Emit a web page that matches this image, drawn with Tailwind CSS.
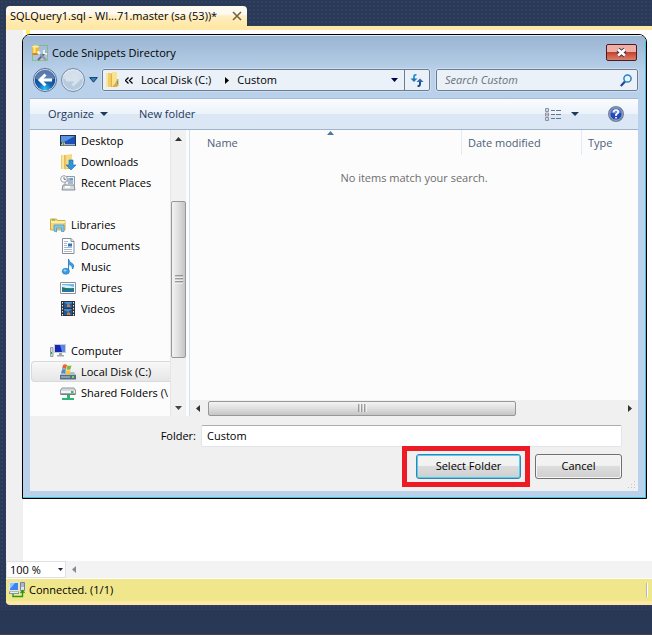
<!DOCTYPE html>
<html lang="en">
<head>
  <meta charset="UTF-8" />
  <meta name="viewport" content="width=device-width, initial-scale=1.0"/>
  <title>SQLQuery1.sql</title>
  <script src="https://cdn.jsdelivr.net/npm/@tailwindcss/browser@4"></script>
</head>
<body class="min-h-screen flex flex-col bg-[#2a3956] pt-1.5 pl-1.5 text-[11px] leading-4 text-black font-['Open_Sans','Noto_Sans',sans-serif] bg-[radial-gradient(#34466a_0.5px,transparent_1px)] bg-[length:4px_4px]">

  <!-- Editor tab -->
  <div class="flex">
    <div class="flex items-center h-5 w-[241px] pl-1 pr-1 rounded-t-sm bg-linear-to-b from-[#fffaf0] from-40% via-[#ffeec2] via-50% to-[#ffe8a6]">
      <span class="whitespace-nowrap">SQLQuery1.sql - WI...71.master (sa (53))*</span>
      <button class="ml-auto" aria-label="Close tab">
        <svg class="size-3" viewBox="0 0 12 12" fill="none" stroke="#75633d" stroke-width="1.6"><path d="M2 2l8 8M10 2l-8 8"/></svg>
      </button>
    </div>
  </div>

  <main class="relative flex-1 flex flex-col border-t-4 border-[#ffe8a6] bg-white">
    <div class="flex-1 flex">
      <div class="w-[17px] bg-[#f0f0f0]"></div>
      <div class="w-1 h-1 ml-[3px] bg-[#ffee62]"></div>
    </div>

    <!-- Dialog -->
    <section role="dialog" aria-label="Code Snippets Directory" class="absolute left-4 right-[5px] top-1 border border-black rounded-t-lg overflow-hidden bg-[#b9d1ea]">
      <div class="border-r border-b border-[#43c3dd] border-t border-t-[#e4eef8] px-[7px] pb-1.5 bg-linear-to-b from-[#9ab5d2] to-[#b9d1ea] to-[36px]">

        <header class="flex items-center h-[33px] pl-0.5">
          <svg class="size-4" viewBox="0 0 16 16">
            <path d="M.5.5h15v15H.5z" fill="none" stroke="#67b22e" stroke-dasharray="1 1"/>
            <path d="M0 1h7v8H0z" fill="#f0b72c"/><path d="M1.500 1h2v8h-2z" fill="#ffe9a0"/><ellipse cx="3.500" cy="1.500" rx="3.500" ry="1.300" fill="#ffe89a"/><ellipse cx="3.500" cy="9" rx="3.500" ry="1" fill="#c98813"/>
            <path d="M6 15l8-8" stroke="#667" stroke-width="1.800"/><path d="M7 8l7 7" stroke="#8c97a8" stroke-width="2"/><path d="M5.500 6.500L8 9" stroke="#e8edf3" stroke-width="2.500"/><path d="M12 5v3l3 1" fill="none" stroke="#edf1f7" stroke-width="2"/>
          </svg>
          <h1 class="ml-1">Code Snippets Directory</h1>
          <button class="ml-auto mr-px flex items-center justify-center w-[31px] h-[17px] rounded-xs border border-[#4e1a26] bg-linear-to-b from-[#eeb0a4] from-45% via-[#c5402f] via-50% to-[#d7806c]" aria-label="Close">
            <svg class="w-[13px] h-[11px]" viewBox="0 0 13 11"><path d="M3 2.500l7 6M10 2.500l-7 6" stroke="#4a3945" stroke-width="4.500"/><path d="M3 2.500l7 6M10 2.500l-7 6" stroke="#fff" stroke-width="2.600"/></svg>
          </button>
        </header>

        <div class="flex items-center h-[29px] pb-[7px]">
          <div class="flex items-center gap-1 mr-1 pl-[3px]">
            <button aria-label="Back">
              <svg class="size-6" viewBox="0 0 24 24">
                <defs><radialGradient id="back" cx=".5" cy=".95" r=".8"><stop offset="0" stop-color="#32c7f5"/><stop offset=".4" stop-color="#1567b4"/><stop offset="1" stop-color="#123e8b"/></radialGradient></defs>
                <circle cx="12" cy="12" r="11.500" fill="#dfe9f4" stroke="#50688a"/><circle cx="12" cy="12" r="10.300" fill="url(#back)"/>
                <path d="M2.500 11a9.500 9.500 0 0 1 19 0q-9.500 2.500-19 0z" fill="#fff" opacity=".3"/>
                <path d="M12.500 6.500L7 12l5.500 5.500M7.500 12H19" fill="none" stroke="#fff" stroke-width="3"/>
              </svg>
            </button>
            <button aria-label="Forward">
              <svg class="size-6" viewBox="0 0 24 24">
                <circle cx="12" cy="12" r="11.500" fill="#dce7f2" stroke="#7389a4"/><circle cx="12" cy="12" r="10" fill="#b8cade"/>
                <path d="M2.500 11a9.500 9.500 0 0 1 19 0q-9.500 2.500-19 0z" fill="#fff" opacity=".4"/>
                <path d="M11.500 6.500L17 12l-5.500 5.500M16.500 12H5" fill="none" stroke="#d6e2ee" stroke-width="3"/>
              </svg>
            </button>
            <button aria-label="Recent pages">
              <svg class="w-[9px] h-[6px]" viewBox="0 0 9 6"><path d="M.7.6h7.600L4.500 5.200z" fill="#3484bd" stroke="#173c68"/></svg>
            </button>
          </div>

          <nav class="flex-1 flex items-center h-[22px] border border-[#6c7d90] rounded-xs bg-[#eaf1f9] outline outline-[#cddded]">
            <svg class="ml-0.5 w-[15px] h-4" viewBox="0 0 15 16"><path d="M1 1h6v14H1z" fill="#f0cd69"/><path d="M1 1h2v14H1z" fill="#fbe59c"/><path d="M6 2l6 1v12H6z" fill="#dfb044"/><path d="M7 0h5v9l-5 6z" fill="#fbe28f"/><path d="M12 7h1.500v7l-4 1z" fill="#dcae3c"/><path d="M12.500 9v3" stroke="#4a93d0"/></svg>
            <svg class="ml-[5px] w-2 h-[7px]" viewBox="0 0 8 7" fill="none" stroke="#000" stroke-width="1.300"><path d="M3.500.5l-3 3 3 3M7.500.5l-3 3 3 3"/></svg>
            <a href="#" class="ml-2 whitespace-nowrap">Local Disk (C:)</a>
            <svg class="ml-3.5 w-1 h-[7px]" viewBox="0 0 4 7"><path d="M0 0v7l4-3.500z"/></svg>
            <a href="#" class="ml-2">Custom</a>
            <button class="ml-auto w-[19px] flex justify-center" aria-label="Previous locations"><svg class="w-[7px] h-1" viewBox="0 0 7 4"><path d="M0 0h7L3.500 4z" fill="#00004e"/></svg></button>
            <button class="w-[25px] h-full border-l border-[#6c7d90] flex items-center justify-center" aria-label="Refresh">
              <svg class="w-[14px] h-[13px]" viewBox="0 0 14 13"><path d="M6.500.7Q4 .5 4 3v2" fill="none" stroke="#2c9bd1" stroke-width="2"/><path d="M.5 4.500h7L4 8z" fill="#2c72b5"/><path d="M7.500 12.300Q10 12.300 10 10V8" fill="none" stroke="#214d88" stroke-width="2"/><path d="M6.500 8h7L10 4.500z" fill="#286bb0"/></svg>
            </button>
          </nav>

          <label class="ml-1.5 flex items-center w-[202px] h-[22px] border border-[#6c7d90] rounded-xs bg-[#eaf1f9] outline outline-[#cddded]">
            <input type="search" aria-label="Search Custom" placeholder="Search Custom" class="flex-1 min-w-0 pl-2 italic outline-none placeholder:text-[#6b7075]">
            <svg class="mr-[5px] w-3 h-[13px]" viewBox="0 0 12 13"><path d="M5 7.500L.8 12" stroke="#1e4a96" stroke-width="2.200"/><circle cx="7.500" cy="4.500" r="3.600" fill="#e5f4fc" stroke="#2c80c0" stroke-width="1.500"/></svg>
          </label>
        </div>

        <!-- Toolbar -->
        <div class="flex items-center h-8 pl-[18px] border-t border-b border-t-[#a5bad3] border-b-[#a0b4cf] text-[#1e395b] bg-linear-to-b from-[#fafcff] to-[#ecf2fb] to-50% shadow-[inset_0_-15px_0_#dce7f5]">
          <button class="flex items-center gap-1.5">Organize <svg class="w-2 h-1" viewBox="0 0 8 4"><path d="M0 0h8L4 4z" fill="#1e395b"/></svg></button>
          <button class="ml-[31px]">New folder</button>
          <button class="ml-auto flex items-center gap-2.5" aria-label="Change your view">
            <svg class="w-4 h-[13px]" viewBox="0 0 16 13">
              <path d="M.5.5h3v3h-3zM.5 5h3v3h-3zM.5 9.500h3v3h-3z" fill="#fff" stroke="#8893a5"/><path d="M1.500 1.500h1v1h-1z" fill="#379"/><path d="M1.500 6h1v1h-1z" fill="#c22"/><path d="M1.500 10.500h1v1h-1z" fill="#284"/>
              <path d="M6 2.500h4M11 2.500h5M6 6.500h4M11 6.500h5M6 10.500h4M11 10.500h5" stroke="#65758d"/>
            </svg>
            <svg class="w-2 h-1" viewBox="0 0 8 4"><path d="M0 0h8L4 4z" fill="#1e395b"/></svg>
          </button>
          <button class="ml-[29px] mr-3.5" aria-label="Help">
            <svg class="size-4" viewBox="0 0 16 16"><circle cx="8" cy="8" r="7.300" fill="#2248b5" stroke="#77828f" stroke-width="1.400"/><circle cx="8" cy="8" r="6.200" fill="none" stroke="#c9d3e6" stroke-width=".8"/><path d="M3 6.500a5.300 5.300 0 0 1 10 0q-5 2-10 0z" fill="#6b8ee0"/><path d="M5.700 6.200Q5.800 4 8 4t2.300 2Q10.300 7.200 8 8.500V10M8 11v1.600" fill="none" stroke="#fff" stroke-width="1.700"/></svg>
          </button>
        </div>

        <div class="flex h-[286px] bg-[#fcfcfc]">
          <!-- Navigation pane -->
          <ul class="w-[140px] overflow-hidden whitespace-nowrap *:flex *:items-center *:h-[21px] *:gap-[5px] *:pl-[30px]">
            <li>
              <svg class="size-4 shrink-0" viewBox="0 0 16 16"><path d="M0 2h16v11H0z" fill="#234"/><path d="M1 3h14v9H1z" fill="#1b51b8"/><path d="M1 3h14L4 9H1z" fill="#5a94e4"/><path d="M1 11h14v1.500H1z" fill="#9db3cc"/><path d="M2 9.500h3v2.500H2z" fill="#e9c243"/><path d="M3 10h1v2H3z" fill="#3ba548"/></svg>
              <a href="#">Desktop</a>
            </li>
            <li>
              <svg class="size-4 shrink-0" viewBox="0 0 16 16"><path d="M1 1h10v14H1z" fill="#dcae42"/><path d="M1.500 1h3v14h-3z" fill="#fae7a0"/><path d="M5 1l7-1v11l-7 5z" fill="#f6d984"/><path d="M5 1v14" stroke="#d3a640" stroke-width=".8"/><path d="M9 6h4v5h3l-5 5-5-5h3z" fill="#2f96da" stroke="#1769ab" stroke-width=".6"/></svg>
              <a href="#">Downloads</a>
            </li>
            <li>
              <svg class="size-4 shrink-0" viewBox="0 0 16 16"><path d="M5 1.500h9.500v9H5z" fill="#edf2f7" stroke="#929aa4"/><path d="M7 4h3M7 6h6M8 8h5" stroke="#62809e"/><path d="M10 3h3v2h-3z" fill="#58a4d9"/><path d="M3 10h11l1 5H2z" fill="#d5dadf" stroke="#8a9097"/><path d="M5 12h5" stroke="#fff" stroke-width="2"/><circle cx="4" cy="4" r="3.300" fill="#fff" stroke="#9aa0a5"/><path d="M4 2v2.300h2" fill="none" stroke="#555" stroke-width=".8"/></svg>
              <a href="#">Recent Places</a>
            </li>
            <li></li>
            <li class="pl-5!">
              <svg class="size-4 shrink-0" viewBox="0 0 16 16"><path d="M.5 2h6l1 1.500h7.500V13H.5z" fill="#f5d775" stroke="#d2ab43"/><path d="M1 5h14" stroke="#fff5c8" stroke-width="1.500"/><path d="M2 3h3" stroke="#4cae45"/><path d="M4 14V8h10v6.500h-2.500V11h-5v4z" fill="#86c8e9" stroke="#4a98c4" stroke-width=".8"/></svg>
              <a href="#">Libraries</a>
            </li>
            <li>
              <svg class="size-4 shrink-0" viewBox="0 0 16 16"><path d="M2.500.5h8.500l3 3v12H2.500z" fill="#fff" stroke="#858d98"/><path d="M11 .5v3h3" fill="#dde3ea" stroke="#858d98"/><path d="M4 3.500h4M4 5.500h3M4 7.500h3M4 9.500h8M4 11.500h8M4 13.500h8" stroke="#a9b8cc"/><path d="M8 5.500h4v3H8z" fill="#2b77bb"/></svg>
              <a href="#">Documents</a>
            </li>
            <li>
              <svg class="size-4 shrink-0" viewBox="0 0 16 16"><path d="M8.500 12V0Q9 3 12 4.500T12.500 10Q13 6.500 9.500 5.500" fill="#3aa1e6" stroke="#1c73bd" stroke-width=".8"/><ellipse cx="5.800" cy="12.300" rx="3.600" ry="3" fill="#379fe5" stroke="#1b70b7" stroke-width=".6"/><ellipse cx="5" cy="11.500" rx="1.500" ry="1" fill="#9bd7fb"/></svg>
              <a href="#">Music</a>
            </li>
            <li>
              <svg class="size-4 shrink-0" viewBox="0 0 16 16"><path d="M.5 2.500h15v11H.5z" fill="#fff" stroke="#8b929a"/><path d="M2 4h12v8H2z" fill="#71bbeb"/><path d="M2 5q7 0 12 2v1H2z" fill="#d8f0fa"/><path d="M2 7q6 2 12 1v2H2z" fill="#257a65"/><path d="M2 10h12v2H2z" fill="#2874ad"/></svg>
              <a href="#">Pictures</a>
            </li>
            <li>
              <svg class="size-4 shrink-0" viewBox="0 0 16 16"><path d="M1 0h14v15H1z" fill="#283442"/><path d="M2.500 1v14M13.500 1v14" stroke="#e8edf1" stroke-dasharray="1.500 1.500"/><path d="M4 1h8v6H4zM4 8h8v6H4z" fill="#418fd2"/><path d="M4 1l4 3 4-2v5H4zM4 9l4 2 4-3v6H4z" fill="#245895"/><path d="M7 4l2-1 2 3H7zM7 12l2-1 2 3H7z" fill="#d27c41"/></svg>
              <a href="#">Videos</a>
            </li>
            <li></li>
            <li class="pl-5!">
              <svg class="size-4 shrink-0" viewBox="0 0 16 16"><path d="M4 1h12v9H4z" fill="#c7cdd3"/><path d="M5 2h10v7H5z" fill="#1428b5"/><path d="M10 2h5v7h-3z" fill="#5b86e8"/><path d="M9 10h3v2h2v1.500H7V12h2z" fill="#a0a7ad"/><path d="M.5 4.500h2.500v9H.5z" fill="#d3d9de" stroke="#838b92" stroke-width=".8"/><path d="M1.500 9v2" stroke="#36a83f"/></svg>
              <a href="#">Computer</a>
            </li>
            <li class="ml-px pl-7! border border-r-0 border-[#d9d9d9] rounded-l-sm bg-linear-to-b from-[#f8f8f8] to-[#e6e6e6]">
              <svg class="size-4 shrink-0" viewBox="0 0 16 16"><path d="M2 8h12l2 3v4H0v-4z" fill="#b4bcc5"/><path d="M0 11h16v4.500H0z" fill="#566f86"/><path d="M1 12h9v2H1z" fill="#87a0b3"/><path d="M12 12h2v2h-2z" fill="#6ee263"/><path d="M3 1q2-1.500 4 0L6 5q-2-1-4 0z" fill="#ed6330"/><path d="M7.500 1.200q2 1 4 0l-1 4q-2 1-4 0z" fill="#7cbc37"/><path d="M2 5.500q2-1 4 0L5 9.500q-2-1-4 0z" fill="#3f8fdd"/><path d="M6.500 6q2 1 4 0l-1 4q-2 1-4 0z" fill="#f7c52d"/></svg>
              <a href="#">Local Disk (C:)</a>
            </li>
            <li>
              <svg class="size-4 shrink-0" viewBox="0 0 16 16"><path d="M2 3h12l1.500 2v4.500H.5V5z" fill="#d4d9dd" stroke="#7b848c" stroke-width=".8"/><path d="M1 6h14v3H1z" fill="#f2f4f5"/><path d="M1 9h14" stroke="#525d66"/><path d="M11 6h2.500v2H11z" fill="#36c147"/><path d="M7 10h3v3h4v2H2v-2h5z" fill="#2cb477"/></svg>
              <a href="#">Shared Folders (\</a>
            </li>
          </ul>

          <!-- Vertical scrollbar -->
          <div class="flex flex-col items-center w-4 pt-[7px] pb-1.5 border-l border-[#e6e6e6] bg-[#f1f1f1]">
            <svg class="w-[7px] h-1" viewBox="0 0 7 4"><path d="M0 4h7L3.500 0z" fill="#333"/></svg>
            <div class="mt-[60px] w-[15px] h-[157px] flex items-center justify-center border border-[#979797] rounded-xs bg-linear-to-r from-[#f3f3f3] via-[#dedede] to-[#c5c5c7]">
              <svg class="w-2 h-[9px]" viewBox="0 0 8 9"><path d="M0 1h8M0 4h8M0 7h8" stroke="#555"/><path d="M0 2h8M0 5h8M0 8h8" stroke="#fff"/></svg>
            </div>
            <svg class="mt-auto w-[7px] h-1" viewBox="0 0 7 4"><path d="M0 0h7L3.500 4z" fill="#444"/></svg>
          </div>

          <!-- File list -->
          <div class="flex-1 min-w-0 ml-[3px] border-l border-[#d3e1f1] flex flex-col">
            <div class="relative flex items-center h-[25px] text-[#4c607a]">
              <svg class="absolute left-[137px] top-px w-[7px] h-1" viewBox="0 0 7 4"><path d="M0 4h7L3.500 0z" fill="#47799f"/></svg>
              <button class="flex-1 pl-[17px] text-left">Name</button>
              <button class="w-[120px] h-full pl-1.5 border-l border-[#e2ebf5] text-left">Date modified</button>
              <button class="w-[57px] h-full pl-1.5 border-l border-[#e2ebf5] text-left">Type</button>
            </div>
            <p class="mt-[15px] text-center text-[#6d6d6d]">No items match your search.</p>

            <!-- Horizontal scrollbar -->
            <div class="mt-auto flex items-center h-4 px-1.5 bg-[#f0f0f0]">
              <svg class="w-1 h-[7px]" viewBox="0 0 4 7"><path d="M4 0v7L0 3.500z" fill="#333"/></svg>
              <div class="ml-2 w-[308px] h-[15px] flex items-center justify-center border border-[#979797] rounded-xs bg-linear-to-b from-[#f3f3f3] via-[#dedede] to-[#c5c5c7]">
                <svg class="w-[9px] h-2" viewBox="0 0 9 8"><path d="M1 0v8M4 0v8M7 0v8" stroke="#555"/><path d="M2 0v8M5 0v8M8 0v8" stroke="#fff"/></svg>
              </div>
              <svg class="ml-auto w-1 h-[7px]" viewBox="0 0 4 7"><path d="M0 0v7l4-3.500z" fill="#333"/></svg>
            </div>
          </div>
        </div>

        <form class="relative h-[75px] pt-[9px] pr-4 bg-[#f0f0f0]">
          <div class="flex items-center">
            <label for="folder" class="w-[166px] text-right">Folder:</label>
            <input id="folder" type="text" value="Custom" class="ml-[5px] flex-1 h-[22px] px-[5px] pb-0.5 border border-[#e3e3eb] border-t-[#abadb3] rounded-xs bg-white">
          </div>
          <div class="flex justify-end -mt-px gap-[5px]">
            <div class="p-[3px] pl-[9px] pr-1 border-5 border-[#ed1c24]">
              <button type="button" class="w-[105px] h-[25px] pb-0.5 border border-[#3c7fb1] rounded-[3px] bg-linear-to-b from-[#f2f2f2] from-45% via-[#dcdcdc] via-50% to-[#cfcfcf] shadow-[inset_0_0_0_1px_#48d1f5]">Select Folder</button>
            </div>
            <button type="button" class="mt-2 w-[87px] h-[25px] pb-0.5 border border-[#707070] rounded-[3px] bg-linear-to-b from-[#f2f2f2] from-45% via-[#dddddd] via-50% to-[#cfcfcf] shadow-[inset_0_0_0_1px_#f6f6f6]">Cancel</button>
          </div>
          <svg class="absolute right-0.5 bottom-0.5 size-[9px]" viewBox="0 0 9 9" fill="#c4c4c4"><path d="M7 1h1v1H7zM4 4h1v1H4zM7 4h1v1H7zM1 7h1v1H1zM4 7h1v1H4zM7 7h1v1H7z"/></svg>
        </form>
      </div>
    </section>

    <div class="flex items-center h-[17px] mb-px bg-[#f3f3f3]">
      <div class="relative flex items-center">
        <select aria-label="Zoom" class="appearance-none w-[60px] h-[17px] pl-[3px] border border-[#e0e0e0] bg-white leading-[15px]">
          <option>100 %</option>
        </select>
        <svg class="absolute right-[3px] w-[5px] h-[3px] pointer-events-none" viewBox="0 0 5 3"><path d="M0 0h5L2.500 3z" fill="#1b293e"/></svg>
      </div>
      <svg class="ml-1.5 w-1 h-[7px]" viewBox="0 0 4 7"><path d="M4 0v7L0 3.500z" fill="#868999"/></svg>
    </div>
  </main>

  <footer class="flex items-center h-[26px] pl-[3px] pr-1 rounded-bl-sm border-b-4 border-[#ffe8a6] bg-[#f0e68c]">
    <svg class="size-4" viewBox="0 0 16 16"><path d="M.5.5h9v8h-9z" fill="#3b83f2" stroke="#dce4ef"/><path d="M1 1h5L1 7z" fill="#92c5ff"/><path d="M0 9.500h10v2.500H0z" fill="#8295ae"/><path d="M1 10.500h8" stroke="#e8edf4"/><path d="M11.500.5h4v8h-4z" fill="#dfe5ed" stroke="#73859f"/><path d="M12 2h3M12 4h3" stroke="#7187a6"/><path d="M4 12v2.500h9.500V9M11.500 11l2-2.500 2 2.500" fill="none" stroke="#2a9b18" stroke-width="1.400"/></svg>
    <span class="ml-1">Connected. (1/1)</span>
    <div class="ml-auto w-0.5 h-3.5 bg-[#b4b6b8] border-r border-white"></div>
  </footer>
  <div class="-ml-1.5 mt-[5px] h-[25px] bg-[#293955] border-b border-[#45464c]"></div>
</body>
</html>
